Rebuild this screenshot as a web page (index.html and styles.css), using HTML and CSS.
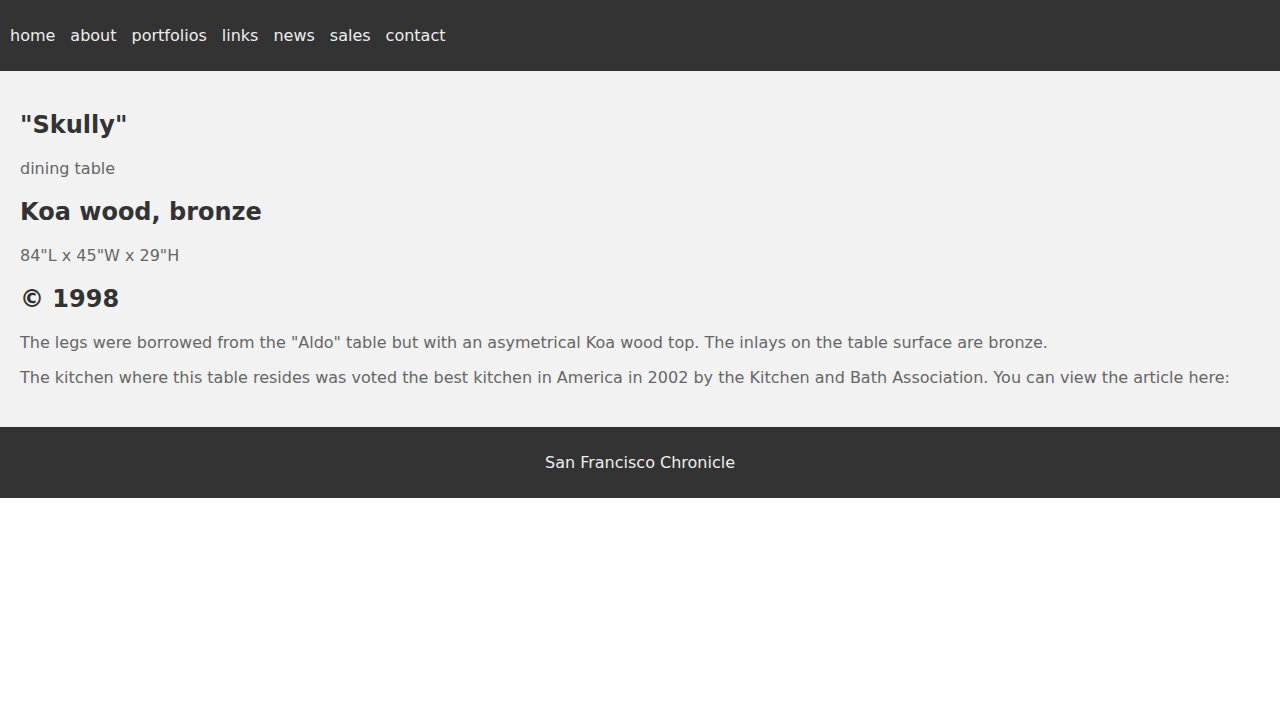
FILE: index.html
```html
<!DOCTYPE html>
<html lang="en">
<head>
<meta charset="utf-8">
<title>"Skully" dining table</title>
<link rel="stylesheet" href="styles.css">
</head>
<body>
<header class="site-header">
  <nav class="nav">
    <a href="#">home</a>
    <a href="#">about</a>
    <a href="#">portfolios</a>
    <a href="#">links</a>
    <a href="#">news</a>
    <a href="#">sales</a>
    <a href="#">contact</a>
  </nav>
</header>
<main class="content">
  <h2>"Skully"</h2>
  <p>dining table</p>
  <h2>Koa wood, bronze</h2>
  <p>84"L x 45"W x 29"H</p>
  <h2>© 1998</h2>
  <p>The legs were borrowed from the "Aldo" table but with an asymetrical Koa wood top. The inlays on the table surface are bronze.</p>
  <p>The kitchen where this table resides was voted the best kitchen in America in 2002 by the Kitchen and Bath Association. You can view the article here:</p>
</main>
<footer class="site-footer">
  <a href="#">San Francisco Chronicle</a>
</footer>
</body>
</html>
```
FILE: styles.css
```css
html, body {
  margin: 0;
  padding: 0;
  background: #fff;
  font-family: "DejaVu Sans", sans-serif;
  font-size: 16px;
}
.site-header {
  background: #333;
  padding: 26px 10px;
}
.nav {
  display: flex;
  gap: 15px;
}
.nav a {
  color: #eee;
  text-decoration: none;
}
.content {
  background: #f2f2f2;
  padding: 20px 20px 24px;
}
.content h2 {
  color: #333;
  font-size: 24px;
  font-weight: bold;
  margin: 20px 0;
}
.content p {
  color: #666;
  margin: 16px 0;
}
.site-footer {
  background: #333;
  padding: 26px 10px;
  text-align: center;
}
.site-footer a {
  color: #eee;
  text-decoration: none;
}
```
